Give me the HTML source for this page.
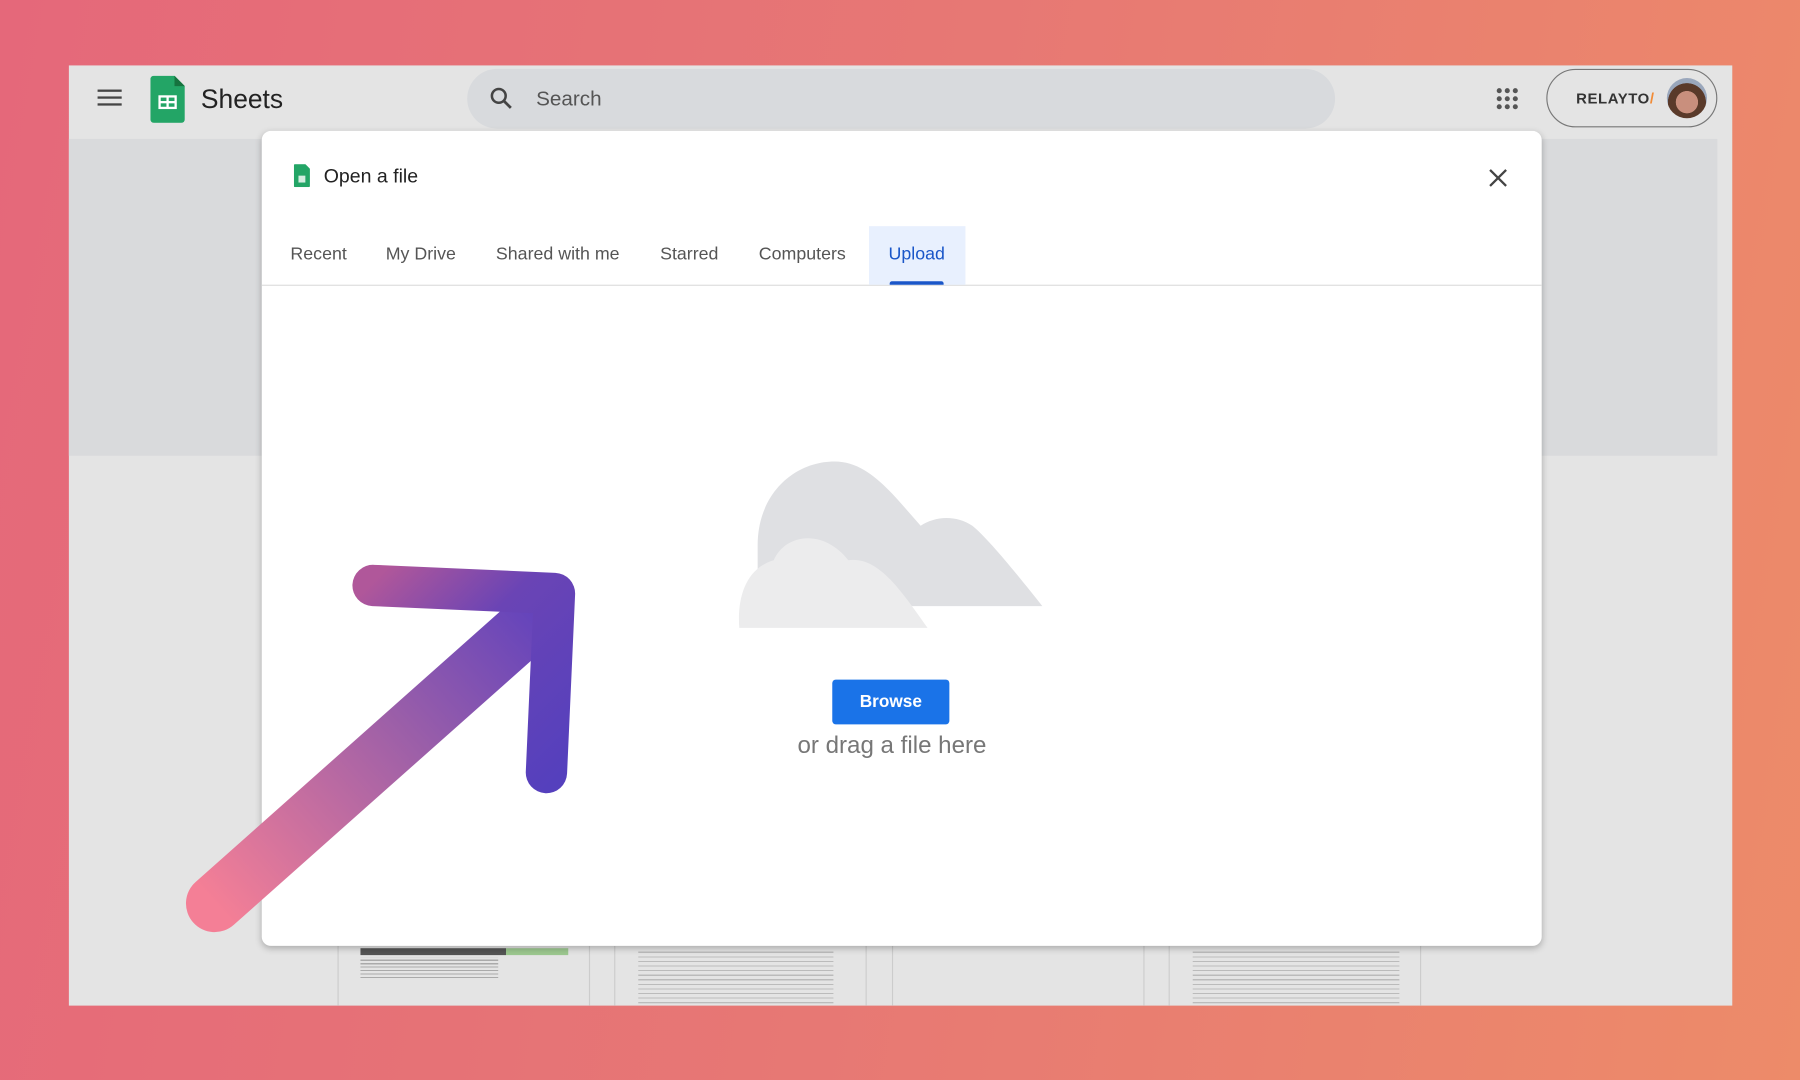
<!DOCTYPE html>
<html><head><meta charset="utf-8"><style>
*{margin:0;padding:0;box-sizing:border-box}
html,body{width:1800px;height:1080px;overflow:hidden}
body{background:linear-gradient(100deg,#e5687a 0%,#e77874 50%,#ed8b69 100%);font-family:"Liberation Sans",Arial,sans-serif}
#s{width:1568px;height:941px;transform:scale(1.14796);transform-origin:0 0;position:relative}
.abs{position:absolute}
</style></head><body><div id="s">
<div class="abs" style="left:60px;top:57px;width:1449px;height:819px;background:#e4e4e4"></div>
<div class="abs" style="left:60px;top:121px;width:1436px;height:276px;background:#d9dadc"></div>
<div class="abs" style="left:85px;top:78px;width:21px;height:2px;background:#444;box-shadow:0 6px 0 #444,0 12px 0 #444"></div>
<svg class="abs" style="left:131px;top:66px" width="30" height="41" viewBox="0 0 30 41"><path d="M3 0h18l9 9v29a3 3 0 0 1-3 3H3a3 3 0 0 1-3-3V3a3 3 0 0 1 3-3z" fill="#23a566"/><path d="M21 0v9h9z" fill="#16733f"/><rect x="7" y="17" width="16" height="12" fill="#fff"/><rect x="9" y="19" width="5" height="3" fill="#23a566"/><rect x="16" y="19" width="5" height="3" fill="#23a566"/><rect x="9" y="24" width="5" height="3" fill="#23a566"/><rect x="16" y="24" width="5" height="3" fill="#23a566"/></svg>
<div class="abs" style="left:175px;top:73px;font-size:23px;color:#222">Sheets</div>
<div class="abs" style="left:407px;top:60px;width:756px;height:52px;border-radius:26px;background:#d8dadd"></div>
<svg class="abs" style="left:426px;top:75px" width="22" height="22" viewBox="0 0 22 22"><circle cx="8.5" cy="8.5" r="6" fill="none" stroke="#444" stroke-width="2.2"/><path d="M13 13l6 6" stroke="#444" stroke-width="2.4"/></svg>
<div class="abs" style="left:467px;top:76px;font-size:18px;color:#555">Search</div>
<svg class="abs" style="left:1303px;top:76px" width="20" height="20"><g fill="#555"><circle cx="3" cy="3" r="2.2"/><circle cx="10" cy="3" r="2.2"/><circle cx="17" cy="3" r="2.2"/><circle cx="3" cy="10" r="2.2"/><circle cx="10" cy="10" r="2.2"/><circle cx="17" cy="10" r="2.2"/><circle cx="3" cy="17" r="2.2"/><circle cx="10" cy="17" r="2.2"/><circle cx="17" cy="17" r="2.2"/></g></svg>
<div class="abs" style="left:1347px;top:60px;width:149px;height:51px;border-radius:26px;border:1px solid #777"></div>
<div class="abs" style="left:1373px;top:78px;font-size:13px;font-weight:bold;color:#333;letter-spacing:.5px">RELAYTO<span style="color:#f28b36">/</span></div>
<div class="abs" style="left:1452px;top:68px;width:35px;height:35px;border-radius:50%;background:radial-gradient(circle at 50% 60%,#c98f7d 0 35%,#5a3a2a 36% 60%,#9aa7bc 61%)"></div>
<div class="abs" style="left:294px;top:824px;width:220px;height:52px;border-left:1px solid #ccc;border-right:1px solid #ccc"><div style="margin:2px 0 0 19px;width:181px;height:6px;background:linear-gradient(90deg,#555 70%,#9cc78f 70%)"></div><div style="margin:2px 0 0 19px;width:120px;height:20px;background:repeating-linear-gradient(#e4e4e4 0 2px,#aaa 2px 3px)"></div></div>
<div class="abs" style="left:535px;top:824px;width:220px;height:52px;border-left:1px solid #ccc;border-right:1px solid #ccc"><div style="margin:2px 0 0 20px;width:170px;height:48px;background:repeating-linear-gradient(#e4e4e4 0 3px,#bbb 3px 4px)"></div></div>
<div class="abs" style="left:777px;top:824px;width:220px;height:52px;border-left:1px solid #ccc;border-right:1px solid #ccc"></div>
<div class="abs" style="left:1018px;top:824px;width:220px;height:52px;border-left:1px solid #ccc;border-right:1px solid #ccc"><div style="margin:2px 0 0 20px;width:180px;height:48px;background:repeating-linear-gradient(#e4e4e4 0 3px,#bbb 3px 4px)"></div></div>
<div class="abs" style="left:228px;top:114px;width:1115px;height:710px;background:#fff;border-radius:8px;box-shadow:0 2px 6px rgba(0,0,0,.25)">
<svg class="abs" style="left:28px;top:29px" width="14" height="20" viewBox="0 0 14 20"><path d="M1 0h9l4 4v15a1 1 0 0 1-1 1H1a1 1 0 0 1-1-1V1a1 1 0 0 1 1-1z" fill="#23a566"/><rect x="4" y="10" width="6" height="6" fill="#fff" opacity=".8"/></svg>
<div class="abs" style="left:54px;top:30px;font-size:17px;color:#222">Open a file</div>
<svg class="abs" style="left:1069px;top:33px" width="16" height="16"><path d="M1 1l14 14M15 1L1 15" stroke="#444" stroke-width="2"/></svg>
<div class="abs" style="left:0;top:134px;width:1115px;height:1px;background:#ddd"></div>
<div class="abs" style="left:529px;top:83px;width:84px;height:51px;background:#e8f0fe"></div>
<div class="abs" style="left:547px;top:131px;width:47px;height:3px;background:#1a56c8;border-radius:2px 2px 0 0"></div>
<div class="abs" style="top:99px;left:0;font-size:15.5px;color:#555;width:1115px">
<span class="abs" style="left:25px">Recent</span><span class="abs" style="left:108px">My Drive</span><span class="abs" style="left:204px">Shared with me</span><span class="abs" style="left:347px">Starred</span><span class="abs" style="left:433px">Computers</span><span class="abs" style="left:546px;color:#1a56c8">Upload</span></div>
<svg class="abs" style="left:414px;top:286px" width="270" height="150" viewBox="0 0 270 150"><path d="M18 128 L18 75 C18 30 50 2 85 2 C115 2 135 30 160 58 C172 50 190 48 205 58 C220 70 250 108 266 128 Z" fill="#dfe0e3"/><path d="M2 147 C0 120 8 95 32 88 C42 65 75 60 97 88 C122 85 140 110 166 147 Z" fill="#ececed"/></svg>
<div class="abs" style="left:497px;top:478px;width:102px;height:39px;background:#1a73e8;border-radius:3px;color:#fff;font-size:15px;font-weight:bold;text-align:center;line-height:39px">Browse</div>
<div class="abs" style="left:0;width:1098px;top:524px;text-align:center;font-size:21px;color:#777">or drag a file here</div>
</div>
<svg class="abs" style="left:0;top:0" width="1568" height="941"><defs><linearGradient id="g" x1="187" y1="787" x2="487" y2="517" gradientUnits="userSpaceOnUse"><stop offset="0" stop-color="#f47f96"/><stop offset=".55" stop-color="#9c5fa8"/><stop offset="1" stop-color="#5a3fbf"/></linearGradient><linearGradient id="h" x1="322" y1="510" x2="487" y2="676" gradientUnits="userSpaceOnUse"><stop offset="0" stop-color="#b0579a"/><stop offset=".4" stop-color="#6a44b5"/><stop offset="1" stop-color="#5540bd"/></linearGradient></defs>
<path d="M187 787L465 540" stroke="url(#g)" stroke-width="50" stroke-linecap="round"/>
<path d="M325 510L483 517L476 673" stroke="url(#h)" stroke-width="36" stroke-linecap="round" stroke-linejoin="round" fill="none"/></svg>
</div></body></html>
